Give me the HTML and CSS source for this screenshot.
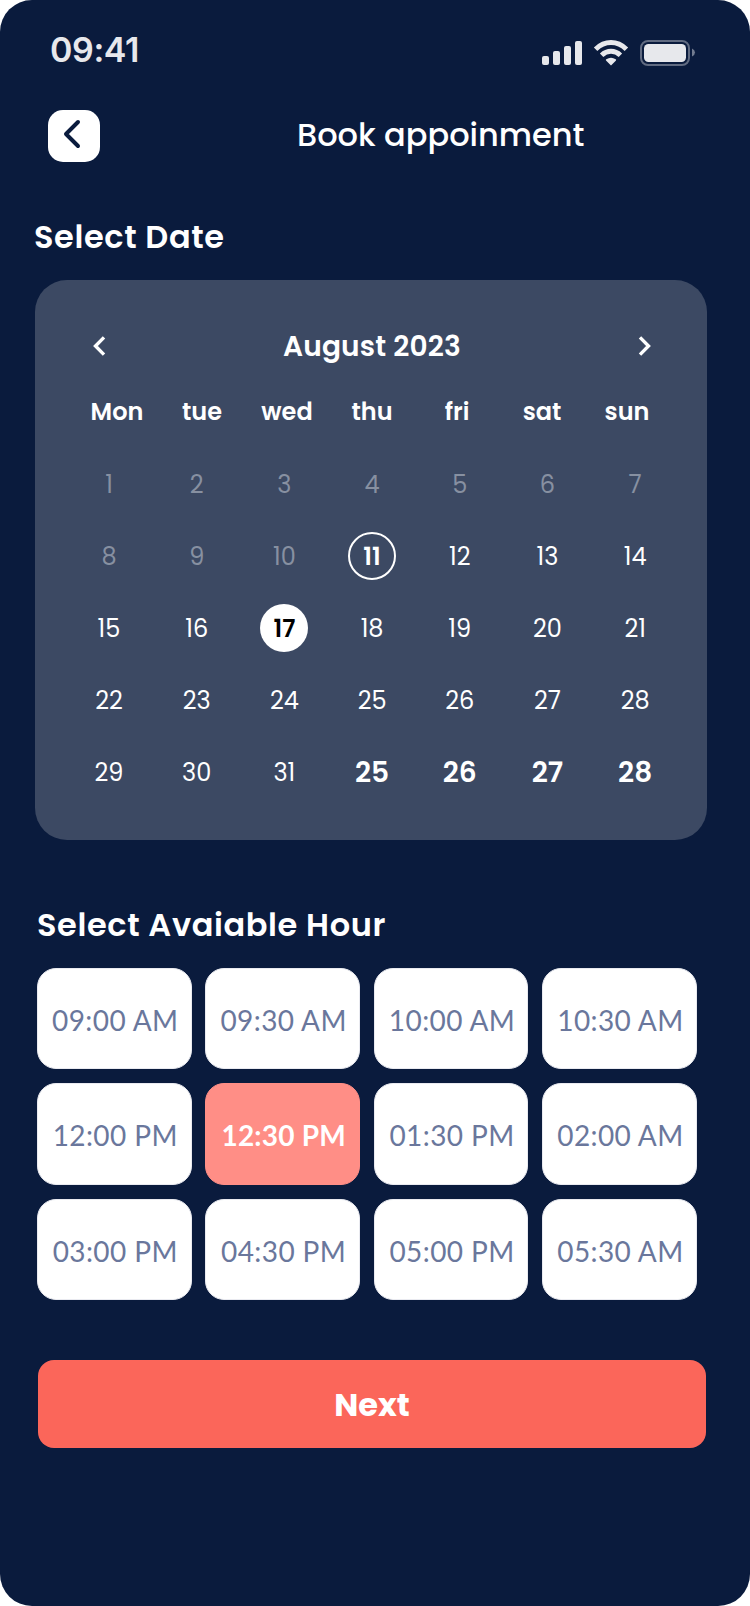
FILE: index.html
```
<!DOCTYPE html>
<html lang="en">
<head>
<meta charset="utf-8">
<title>Book appoinment</title>
<link rel="stylesheet" href="styles.css">
</head>
<body>
<main class="screen">
  <div class="status">
    <span class="clock">09:41</span>
    <svg class="status-icons" width="154" height="28" viewBox="0 0 154 28" fill="#e7e8ec">
      <rect x="0" y="17" width="7" height="9" rx="2"/>
      <rect x="11" y="12" width="7" height="14" rx="2"/>
      <rect x="22" y="7" width="7" height="19" rx="2"/>
      <rect x="33" y="2" width="7" height="24" rx="2"/>
      <g fill="none" stroke="#e7e8ec" stroke-width="5">
        <path d="M53.6 10.2C62.8 1.3 75.2 1.3 84.4 10.2"/>
        <path d="M59.6 16.2C65.2 10.9 72.8 10.9 78.4 16.2"/>
      </g>
      <path d="M69 26.6l-5-5.1q-.5-.7.3-1.2q4.700-3 9.400 0q.8.5.3 1.200z"/>
      <rect x="99" y="2" width="48" height="24" rx="7" fill="none" stroke="#616b81" stroke-width="2"/>
      <rect x="102" y="5" width="42" height="18" rx="4.500"/>
      <path d="M150 9.500q3 1.500 3 4t-3 4z" fill="#737c90"/>
    </svg>
  </div>
  <header class="header">
    <button class="back" aria-label="Back">
      <svg width="52" height="52" viewBox="0 0 52 52" fill="none" stroke="#0a1b3d" stroke-width="4" stroke-linecap="round" stroke-linejoin="round"><path d="M30 12L18 24L30 36"/></svg>
    </button>
    <h1 class="title">Book appoinment</h1>
  </header>
  <h2 class="section section-date">Select Date</h2>
  <section class="calendar">
    <div class="month">
      <svg width="14" height="22" viewBox="0 0 14 22" fill="none" stroke="#fff" stroke-width="3.400"><path d="M12 2.400L3.500 11L12 19.600"/></svg>
      <span class="month-name">August 2023</span>
      <svg width="14" height="22" viewBox="0 0 14 22" fill="none" stroke="#fff" stroke-width="3.400"><path d="M2 2.400L10.500 11L2 19.600"/></svg>
    </div>
    <div class="weekdays">
      <span>Mon</span><span>tue</span><span>wed</span><span>thu</span><span>fri</span><span>sat</span><span>sun</span>
    </div>
    <div class="days">
      <span class="past">1</span><span class="past">2</span><span class="past">3</span><span class="past">4</span><span class="past">5</span><span class="past">6</span><span class="past">7</span>
      <span class="past">8</span><span class="past">9</span><span class="past">10</span><span class="today">11</span><span>12</span><span>13</span><span>14</span>
      <span>15</span><span>16</span><span class="picked">17</span><span>18</span><span>19</span><span>20</span><span>21</span>
      <span>22</span><span>23</span><span>24</span><span>25</span><span>26</span><span>27</span><span>28</span>
      <span>29</span><span>30</span><span>31</span><span class="next-month">25</span><span class="next-month">26</span><span class="next-month">27</span><span class="next-month">28</span>
    </div>
  </section>
  <h2 class="section section-hour">Select Avaiable Hour</h2>
  <section class="slots">
    <button class="slot">09:00 AM</button><button class="slot">09:30 AM</button><button class="slot">10:00 AM</button><button class="slot">10:30 AM</button>
    <button class="slot">12:00 PM</button><button class="slot slot-active">12:30 PM</button><button class="slot">01:30 PM</button><button class="slot">02:00 AM</button>
    <button class="slot">03:00 PM</button><button class="slot">04:30 PM</button><button class="slot">05:00 PM</button><button class="slot">05:30 AM</button>
  </section>
  <button class="next">Next</button>
</main>
</body>
</html>
```
FILE: styles.css
```
* { box-sizing: border-box; }
body { margin: 0; background: #fff; }
button { border: 0; padding: 0; margin: 0; font: inherit; }
.screen {
  width: 750px;
  height: 1606px;
  background: #0a1b3d;
  border-radius: 32px;
  overflow: hidden;
  color: #fff;
  font-family: Poppins, Inter, "Liberation Sans", sans-serif;
}
.status {
  display: flex;
  justify-content: space-between;
  padding: 30px 54px 0 49px;
  height: 110px;
}
.clock { font: 600 34px/40px Inter, sans-serif; color: #e7e8ec; letter-spacing: -0.4px; padding-left: 1px; }
.status-icons { margin-top: 9px; }
.header { display: flex; align-items: flex-start; padding-left: 48px; height: 107px; }
.back { width: 52px; height: 52px; border-radius: 15px; background: #fff; }
.back svg { display: block; }
.title { margin: 5px 0 0 197px; font-size: 32px; line-height: 40px; font-weight: 500; white-space: nowrap; }
.section { margin: 0; font-size: 32px; line-height: 40px; font-weight: 600; white-space: nowrap; letter-spacing: 0.6px; }
.section-date { padding-left: 34px; height: 63px; }
.calendar {
  width: 672px;
  height: 560px;
  margin-left: 35px;
  border-radius: 32px;
  background: #3c4963;
  padding-top: 46px;
}
.month { display: flex; align-items: center; justify-content: space-between; padding: 0 55px 0 57px; height: 40px; }
.month-name { font-size: 28px; font-weight: 600; letter-spacing: 0.2px; padding-top: 2px; }
.weekdays { display: grid; grid-template-columns: repeat(7, 85px); margin: 30px 0 0 39.500px; font-size: 24px; line-height: 32px; font-weight: 600; text-align: center; }
.days { display: grid; grid-template-columns: repeat(7, 48px); column-gap: 39.7px; row-gap: 24px; margin: 32px 0 0 50px; font-size: 24px; line-height: 49px; text-align: center; font-weight: 400; }
.days span { height: 48px; border-radius: 50%; }
.days .past { color: #8790a1; }
.days .today { font-weight: 600; border: 2px solid #fff; line-height: 45px; }
.days .picked { font-weight: 600; background: #fff; color: #000; line-height: 49px; }
.days .next-month { font-size: 28px; font-weight: 600; line-height: 49px; }
.section-hour { margin-top: 65px; padding-left: 37px; height: 63px; }
.slots { display: grid; grid-template-columns: repeat(4, 154.500px); column-gap: 13.900px; row-gap: 14.100px; padding-left: 37px; }
.slot {
  height: 101.400px;
  padding: 2px 0 0 2px;
  border: 1px solid #e9eaf0;
  border-radius: 19px;
  background: #fff;
  color: #6a779c;
  font-family: "Museo Sans", Lato, sans-serif;
  font-size: 28px;
  letter-spacing: 0.4px;
  white-space: nowrap;
}
.slot-active { background: #ff8e86; border-color: #ff8e86; color: #fff; font-weight: 700; letter-spacing: 0.2px; }
.next { display: block; width: 668px; height: 88px; margin: 59.800px 0 0 38px; padding-top: 2px; border-radius: 16px; background: #fb665a; color: #fff; font-size: 32px; font-weight: 700; }
```
